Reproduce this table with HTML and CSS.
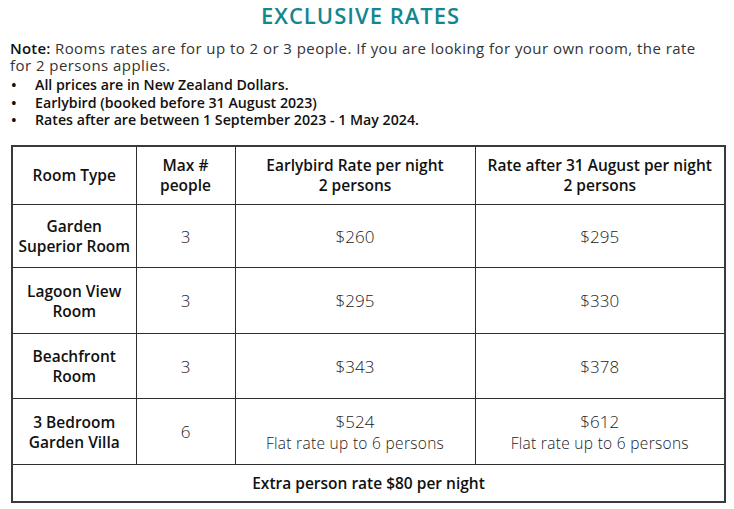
FILE: index.html
```html
<!DOCTYPE html>
<html>
<head>
<meta charset="utf-8">
<link rel="stylesheet" href="styles.css">
</head>
<body>
<div class="page">
  <h1 class="title">EXCLUSIVE RATES</h1>
  <p class="note"><b>Note:</b> Rooms rates are for up to 2 or 3 people. If you are looking for your own room, the rate for 2 persons applies.</p>
  <ul class="bullets">
    <li>All prices are in New Zealand Dollars.</li>
    <li>Earlybird (booked before 31 August 2023)</li>
    <li>Rates after are between 1 September 2023 - 1 May 2024.</li>
  </ul>
  <table class="rates">
    <colgroup>
      <col class="c1"><col class="c2"><col class="c3"><col class="c4">
    </colgroup>
    <tr class="head">
      <th>Room Type</th>
      <th>Max #<br>people</th>
      <th>Earlybird Rate per night<br>2 persons</th>
      <th>Rate after 31 August per night<br>2 persons</th>
    </tr>
    <tr class="r1">
      <th>Garden<br>Superior Room</th>
      <td>3</td><td>$260</td><td>$295</td>
    </tr>
    <tr class="r2">
      <th>Lagoon View<br>Room</th>
      <td>3</td><td>$295</td><td>$330</td>
    </tr>
    <tr class="r3">
      <th>Beachfront<br>Room</th>
      <td>3</td><td>$343</td><td>$378</td>
    </tr>
    <tr class="r4">
      <th>3 Bedroom<br>Garden Villa</th>
      <td>6</td>
      <td>$524<br><span class="sub">Flat rate up to 6 persons</span></td>
      <td>$612<br><span class="sub">Flat rate up to 6 persons</span></td>
    </tr>
    <tr class="foot">
      <th colspan="4">Extra person rate $80 per night</th>
    </tr>
  </table>
</div>
</body>
</html>
```
FILE: styles.css
```css
html, body {
  margin: 0;
  padding: 0;
  background: #ffffff;
}
body {
  font-family: "Open Sans", "Lato", sans-serif;
  color: #222222;
}
.page {
  padding: 0 10px 0 11px;
}
.title {
  margin: 0;
  padding: 0 14px 0 0;
  text-align: center;
  font-size: 22px;
  line-height: 30px;
  font-weight: 600;
  color: #14868f;
  letter-spacing: 1px;
}
.note {
  margin: 10px 0 0 -1px;
  font-size: 15px;
  line-height: 17px;
  color: #333;
  width: 700px;
  letter-spacing: 0.45px;
}
.note b {
  font-weight: 600;
  color: #111;
  letter-spacing: 0.2px;
}
.bullets {
  list-style: none;
  margin: 2px 0 0 0;
  padding: 0;
  font-size: 14.2px;
  line-height: 17.5px;
  font-weight: 600;
  color: #111;
}
.bullets li::before {
  content: "\2022";
  display: inline-block;
  width: 24px;
  font-size: 15px;
  padding-left: 0;
  box-sizing: border-box;
}
.rates {
  margin-top: 16px;
  border-collapse: collapse;
  table-layout: fixed;
  width: 713px;
  border: 2px solid #3a3a3a;
}
.c1 { width: 124px; }
.c2 { width: 99px; }
.c3 { width: 240px; }
.c4 { width: 250px; }
.rates th, .rates td {
  border: 1.5px solid #2e2e2e;
  text-align: center;
  vertical-align: middle;
  padding: 0 2px;
}
.rates th {
  font-size: 15.5px;
  line-height: 20px;
  font-weight: 600;
  color: #111;
}
.rates td {
  font-size: 17px;
  line-height: 21px;
  font-weight: 300;
  color: #222;
}
.rates .sub {
  font-size: 15.5px;
  line-height: 20px;
  letter-spacing: 0.3px;
}
.head { height: 59px; }
.r1 { height: 63px; }
.r2 { height: 66px; }
.r3 { height: 65px; }
.r4 { height: 66px; }
.foot { height: 37px; }
```
